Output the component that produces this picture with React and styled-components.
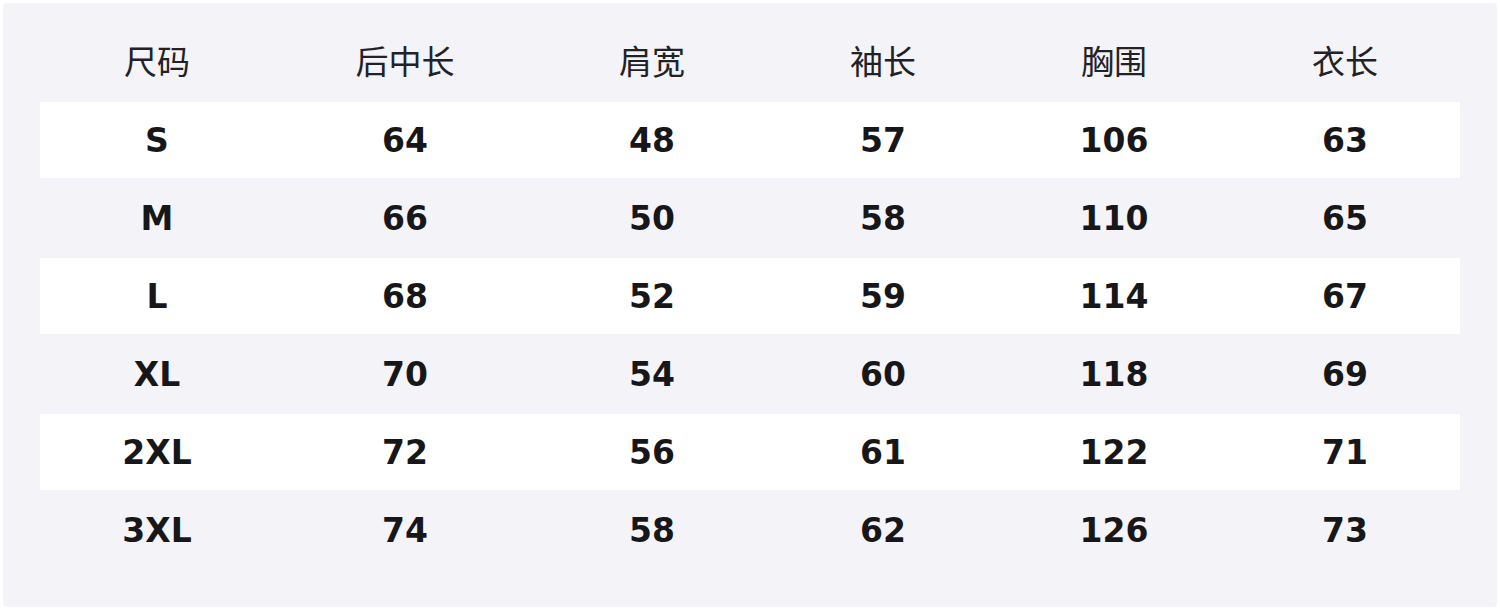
import React from "react";
import styled, { createGlobalStyle } from "styled-components";

const Global = createGlobalStyle`
  html, body { margin: 0; padding: 0; background: #ffffff; }
  body { font-family: "DejaVu Sans", "Noto Sans CJK SC", sans-serif; }
`;

const Page = styled.div`
  padding: 3px;
  width: 1500px;
  height: 610px;
  box-sizing: border-box;
`;

const Panel = styled.div`
  background: #f3f3f8;
  border-radius: 4px;
  height: 100%;
  box-sizing: border-box;
  padding: 19px 37px 39px 37px;
  display: grid;
  grid-template-columns: 234px 262px 232px 230px 232px 230px;
  grid-template-rows: 78px;
  grid-auto-rows: 76px;
  row-gap: 2px;
  align-content: start;
`;

const Row = styled.div`
  display: contents;
`;

const Cell = styled.div`
  display: flex;
  align-items: center;
  justify-content: center;
  background: ${(p) => (p.$striped ? "#ffffff" : "transparent")};
  font-family: ${(p) =>
    p.$head
      ? '"Noto Sans CJK SC", "Noto Sans", sans-serif'
      : '"DejaVu Sans", "Noto Sans", sans-serif'};
  font-weight: ${(p) => (p.$head ? 400 : 700)};
  font-size: 33px;
  color: ${(p) => (p.$head ? "#222226" : "#17171a")};
  padding-bottom: ${(p) => (p.$head ? "2px" : "0")};
  box-sizing: border-box;
`;

const headers = ["尺码", "后中长", "肩宽", "袖长", "胸围", "衣长"];
const rows = [
  ["S", 64, 48, 57, 106, 63],
  ["M", 66, 50, 58, 110, 65],
  ["L", 68, 52, 59, 114, 67],
  ["XL", 70, 54, 60, 118, 69],
  ["2XL", 72, 56, 61, 122, 71],
  ["3XL", 74, 58, 62, 126, 73],
];

export default function App() {
  return (
    <>
      <Global />
      <Page>
        <Panel>
          <Row>
            {headers.map((h) => (
              <Cell key={h} $head>
                {h}
              </Cell>
            ))}
          </Row>
          {rows.map((r, i) => (
            <Row key={r[0]}>
              {r.map((v, j) => (
                <Cell key={j} $striped={i % 2 === 0}>
                  {v}
                </Cell>
              ))}
            </Row>
          ))}
        </Panel>
      </Page>
    </>
  );
}
